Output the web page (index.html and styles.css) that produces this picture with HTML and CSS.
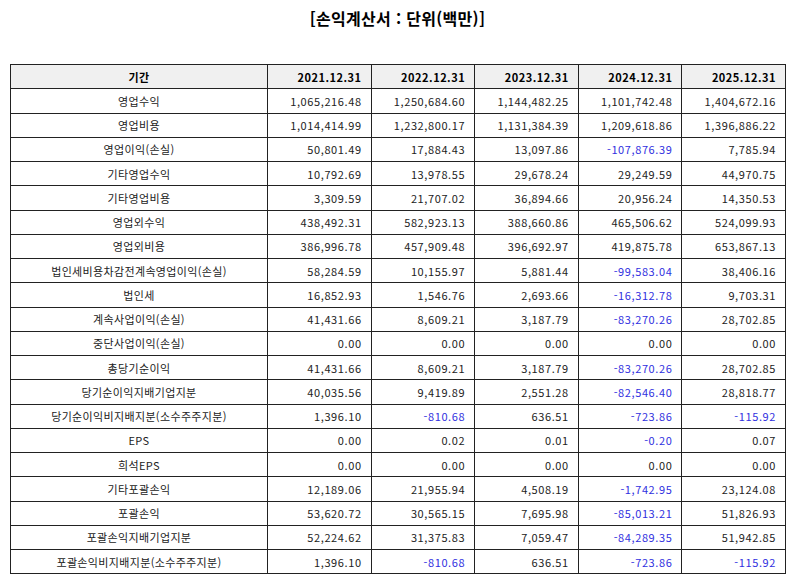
FILE: index.html
```html
<!DOCTYPE html>
<html lang="ko">
<head>
<meta charset="utf-8">
<title>손익계산서</title>
<link rel="stylesheet" href="styles.css">
</head>
<body>
<div class="page">
  <h1 class="title">[손익계산서 : 단위(백만)]</h1>
  <table class="fin">
    <colgroup>
      <col class="c-label"><col class="c-num"><col class="c-num"><col class="c-num"><col class="c-num"><col class="c-num">
    </colgroup>
    <thead>
      <tr><th class="lbl">기간</th><th>2021.12.31</th><th>2022.12.31</th><th>2023.12.31</th><th>2024.12.31</th><th>2025.12.31</th></tr>
    </thead>
    <tbody>
      <tr><td class="lbl">영업수익</td><td>1,065,216.48</td><td>1,250,684.60</td><td>1,144,482.25</td><td>1,101,742.48</td><td>1,404,672.16</td></tr>
      <tr><td class="lbl">영업비용</td><td>1,014,414.99</td><td>1,232,800.17</td><td>1,131,384.39</td><td>1,209,618.86</td><td>1,396,886.22</td></tr>
      <tr><td class="lbl">영업이익(손실)</td><td>50,801.49</td><td>17,884.43</td><td>13,097.86</td><td class="neg">-107,876.39</td><td>7,785.94</td></tr>
      <tr><td class="lbl">기타영업수익</td><td>10,792.69</td><td>13,978.55</td><td>29,678.24</td><td>29,249.59</td><td>44,970.75</td></tr>
      <tr><td class="lbl">기타영업비용</td><td>3,309.59</td><td>21,707.02</td><td>36,894.66</td><td>20,956.24</td><td>14,350.53</td></tr>
      <tr><td class="lbl">영업외수익</td><td>438,492.31</td><td>582,923.13</td><td>388,660.86</td><td>465,506.62</td><td>524,099.93</td></tr>
      <tr><td class="lbl">영업외비용</td><td>386,996.78</td><td>457,909.48</td><td>396,692.97</td><td>419,875.78</td><td>653,867.13</td></tr>
      <tr><td class="lbl">법인세비용차감전계속영업이익(손실)</td><td>58,284.59</td><td>10,155.97</td><td>5,881.44</td><td class="neg">-99,583.04</td><td>38,406.16</td></tr>
      <tr><td class="lbl">법인세</td><td>16,852.93</td><td>1,546.76</td><td>2,693.66</td><td class="neg">-16,312.78</td><td>9,703.31</td></tr>
      <tr><td class="lbl">계속사업이익(손실)</td><td>41,431.66</td><td>8,609.21</td><td>3,187.79</td><td class="neg">-83,270.26</td><td>28,702.85</td></tr>
      <tr><td class="lbl">중단사업이익(손실)</td><td>0.00</td><td>0.00</td><td>0.00</td><td>0.00</td><td>0.00</td></tr>
      <tr><td class="lbl">총당기순이익</td><td>41,431.66</td><td>8,609.21</td><td>3,187.79</td><td class="neg">-83,270.26</td><td>28,702.85</td></tr>
      <tr><td class="lbl">당기순이익지배기업지분</td><td>40,035.56</td><td>9,419.89</td><td>2,551.28</td><td class="neg">-82,546.40</td><td>28,818.77</td></tr>
      <tr><td class="lbl">당기순이익비지배지분(소수주주지분)</td><td>1,396.10</td><td class="neg">-810.68</td><td>636.51</td><td class="neg">-723.86</td><td class="neg">-115.92</td></tr>
      <tr><td class="lbl">EPS</td><td>0.00</td><td>0.02</td><td>0.01</td><td class="neg">-0.20</td><td>0.07</td></tr>
      <tr><td class="lbl">희석EPS</td><td>0.00</td><td>0.00</td><td>0.00</td><td>0.00</td><td>0.00</td></tr>
      <tr><td class="lbl">기타포괄손익</td><td>12,189.06</td><td>21,955.94</td><td>4,508.19</td><td class="neg">-1,742.95</td><td>23,124.08</td></tr>
      <tr><td class="lbl">포괄손익</td><td>53,620.72</td><td>30,565.15</td><td>7,695.98</td><td class="neg">-85,013.21</td><td>51,826.93</td></tr>
      <tr><td class="lbl">포괄손익지배기업지분</td><td>52,224.62</td><td>31,375.83</td><td>7,059.47</td><td class="neg">-84,289.35</td><td>51,942.85</td></tr>
      <tr><td class="lbl">포괄손익비지배지분(소수주주지분)</td><td>1,396.10</td><td class="neg">-810.68</td><td>636.51</td><td class="neg">-723.86</td><td class="neg">-115.92</td></tr>
    </tbody>
  </table>
</div>
</body>
</html>
```

FILE: styles.css
```css
html, body {
  margin: 0;
  padding: 0;
  background: #ffffff;
}

.page {
  padding: 6px 9px 0 10px;
  font-family: "Noto Sans CJK KR", "Noto Sans", sans-serif;
  color: #222222;
}

.title {
  margin: 0;
  text-align: center;
  font-size: 16px;
  line-height: 24px;
  font-weight: bold;
  letter-spacing: 0.3px;
  color: #000000;
}

.fin {
  margin-top: 34px;
  width: 100%;
  border-collapse: collapse;
  table-layout: fixed;
  font-size: 11px;
}

.c-label { width: 257px; }
.c-num { width: 103.6px; }

.fin th,
.fin td {
  border: 1px solid #222222;
  height: 23.25px;
  padding: 0 9px 0 4px;
  text-align: right;
  line-height: 14px;
  letter-spacing: 0.6px;
  white-space: nowrap;
  vertical-align: middle;
}

.fin thead th {
  background: #f0f0f0;
  font-weight: bold;
  letter-spacing: 0.5px;
  color: #000000;
}

.fin .lbl {
  text-align: center;
  padding: 0 4px;
  letter-spacing: 0.35px;
}

.fin td.neg {
  color: #3030e0;
}
```
